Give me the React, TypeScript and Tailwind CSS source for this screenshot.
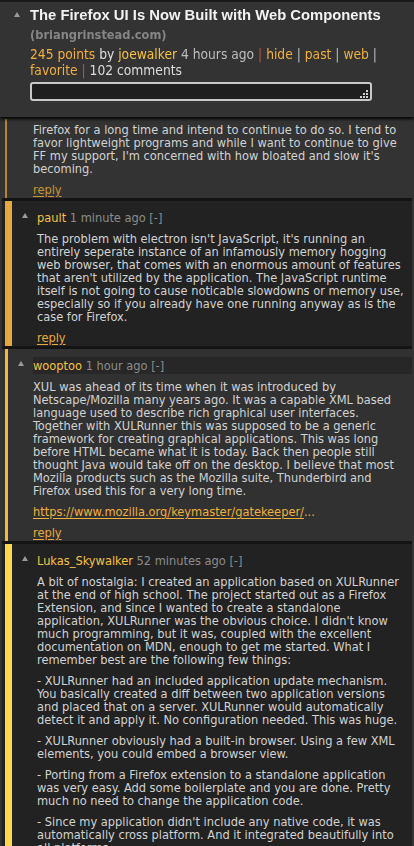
import React from 'react'

const body = "font-['DejaVu_Sans_Condensed','DejaVu_Sans',sans-serif] [font-stretch:condensed]"

type Comment = {
  user: string
  age: string
  bar: string
  barW: string
  bg: string
  highlight?: boolean
  paras: React.ReactNode[]
}

const comments: Comment[] = [
  {
    user: 'pault',
    age: '1 minute ago',
    bar: 'border-[#e6a83c]',
    barW: 'border-l-[7px]',
    bg: 'bg-[#222222]',
    paras: [
      "The problem with electron isn't JavaScript, it's running an entirely seperate instance of an infamously memory hogging web browser, that comes with an enormous amount of features that aren't utilized by the application. The JavaScript runtime itself is not going to cause noticable slowdowns or memory use, especially so if you already have one running anyway as is the case for Firefox.",
    ],
  },
  {
    user: 'wooptoo',
    age: '1 hour ago',
    bar: 'border-[#f6b83b]',
    barW: 'border-l-[3px]',
    bg: 'bg-[#313131]',
    highlight: true,
    paras: [
      'XUL was ahead of its time when it was introduced by Netscape/Mozilla many years ago. It was a capable XML based language used to describe rich graphical user interfaces. Together with XULRunner this was supposed to be a generic framework for creating graphical applications. This was long before HTML became what it is today. Back then people still thought Java would take off on the desktop. I believe that most Mozilla products such as the Mozilla suite, Thunderbird and Firefox used this for a very long time.',
      <>
        <a className="text-[#f0b03c] underline underline-offset-2">https://www.mozilla.org/keymaster/gatekeeper/</a>
        <span className="text-[#f0b03c]">...</span>
      </>,
    ],
  },
  {
    user: 'Lukas_Skywalker',
    age: '52 minutes ago',
    bar: 'border-[#fdd84a]',
    barW: 'border-l-[7px]',
    bg: 'bg-[#222222]',
    paras: [
      "A bit of nostalgia: I created an application based on XULRunner at the end of high school. The project started out as a Firefox Extension, and since I wanted to create a standalone application, XULRunner was the obvious choice. I didn't know much programming, but it was, coupled with the excellent documentation on MDN, enough to get me started. What I remember best are the following few things:",
      '- XULRunner had an included application update mechanism. You basically created a diff between two application versions and placed that on a server. XULRunner would automatically detect it and apply it. No configuration needed. This was huge.',
      '- XULRunner obviously had a built-in browser. Using a few XML elements, you could embed a browser view.',
      '- Porting from a Firefox extension to a standalone application was very easy. Add some boilerplate and you are done. Pretty much no need to change the application code.',
      "- Since my application didn't include any native code, it was automatically cross platform. And it integrated beautifully into all platforms.",
    ],
  },
]

function Arrow({ className = '' }: { className?: string }) {
  return (
    <svg width="6" height="5" viewBox="0 0 6 5" className={className}>
      <path d="M3 0 6 5H0z" fill="#9a9a9a" />
    </svg>
  )
}

function CommentCard({ c }: { c: Comment }) {
  return (
    <div className={`${c.bg} border-t-[3px] border-[#141414] pl-[3px]`}>
      <div className={`flex ${c.barW} ${c.bar} pl-[10px] pt-[8px] pb-[2px]`}>
        <Arrow className="mt-[4px] shrink-0" />
        <div className="min-w-0 flex-1 pl-[9px]">
          <div className={`mb-[6px] py-[2px] ${c.highlight ? 'bg-[#272727]' : ''}`}>
            <span className="text-[#f5c242]">{c.user}</span>{' '}
            <span className="text-[#8c8c8c]">{c.age} [-]</span>
          </div>
          <div className="flex flex-col gap-[8px] pr-[8px] text-[#d2d2d2]">
            {c.paras.map((p, i) => (
              <p key={i}>{p}</p>
            ))}
            <p>
              <a className="text-[#eaa93a] underline underline-offset-2">reply</a>
            </p>
          </div>
        </div>
      </div>
    </div>
  )
}

export default function App() {
  return (
    <div className={`min-h-[846px] bg-[#333333] text-[12.7px] leading-[13px] ${body}`}>
      <header className="fixed inset-x-0 top-0 z-10 border-t-2 border-[#1a1a1a] bg-[#333333] pb-[16px] pl-[14px] pt-[4px] shadow-[0_2px_3px_rgba(0,0,0,0.95)]">
        <div className="flex">
          <Arrow className="mt-[6px] shrink-0" />
          <div className="ml-[10px] flex-1 pr-[10px]">
            <h1 className="whitespace-nowrap font-['Liberation_Sans',Arial,sans-serif] text-[14.8px] font-bold leading-[18px] text-[#f2f2f2] [font-stretch:normal]">
              The Firefox UI Is Now Built with Web Components
            </h1>
            <div className="mt-[5px] text-[12.7px] font-bold leading-[12px] text-[#858585]">(briangrinstead.com)</div>
            <div className="mt-[5px] text-[13.7px] leading-[16px] text-[#bdbdbd]">
              <span className="text-[#f6b03c]">245 points</span> <span className="text-[#e0e0e0]">by</span>{' '}
              <span className="text-[#f5c242]">joewalker</span> 4 hours ago <span className="text-[#b5533a]">|</span>{' '}
              <span className="text-[#f0b03c]">hide</span> <span className="text-[#bbbbbb]">|</span>{' '}
              <span className="text-[#f0b03c]">past</span> <span className="text-[#bbbbbb]">|</span>{' '}
              <span className="text-[#f0b03c]">web</span> <span className="text-[#bbbbbb]">|</span>{' '}
              <span className="text-[#f0b03c]">favorite</span> <span className="text-[#b5533a]">|</span>{' '}
              <span className="text-[#dcdcdc]">102 comments</span>
            </div>
            <div className="relative mt-[4px] w-[342px]">
              <textarea
                rows={1}
                className="block h-[19px] w-full resize-none rounded-[3px] border-2 border-[#c8c8c8] bg-[#1e1e1e] outline-none"
              />
              <svg width="9" height="9" viewBox="0 0 9 9" className="absolute bottom-[3px] right-[4px]">
                <rect x="7" y="1" width="2" height="2" fill="#cfcfcf" />
                <rect x="4" y="4" width="2" height="2" fill="#cfcfcf" />
                <rect x="7" y="4" width="2" height="2" fill="#cfcfcf" />
                <rect x="1" y="7" width="2" height="2" fill="#cfcfcf" />
                <rect x="4" y="7" width="2" height="2" fill="#cfcfcf" />
                <rect x="7" y="7" width="2" height="2" fill="#cfcfcf" />
              </svg>
            </div>
          </div>
        </div>
      </header>

      <main className="px-[2px] pt-[119px]">
        <div className="bg-[#333333] pl-[3px]">
          <div className="border-l-2 border-[#b4862c] pb-[2px] pl-[26px] pr-[8px] pt-[4px] text-[#d2d2d2]">
            <div className="flex flex-col gap-[8px]">
              <p>
                Firefox for a long time and intend to continue to do so. I tend to favor lightweight programs and while I
                want to continue to give FF my support, I'm concerned with how bloated and slow it's becoming.
              </p>
              <p>
                <a className="text-[#c8962e] underline underline-offset-2">reply</a>
              </p>
            </div>
          </div>
        </div>
        {comments.map((c) => (
          <CommentCard key={c.user} c={c} />
        ))}
      </main>
    </div>
  )
}
